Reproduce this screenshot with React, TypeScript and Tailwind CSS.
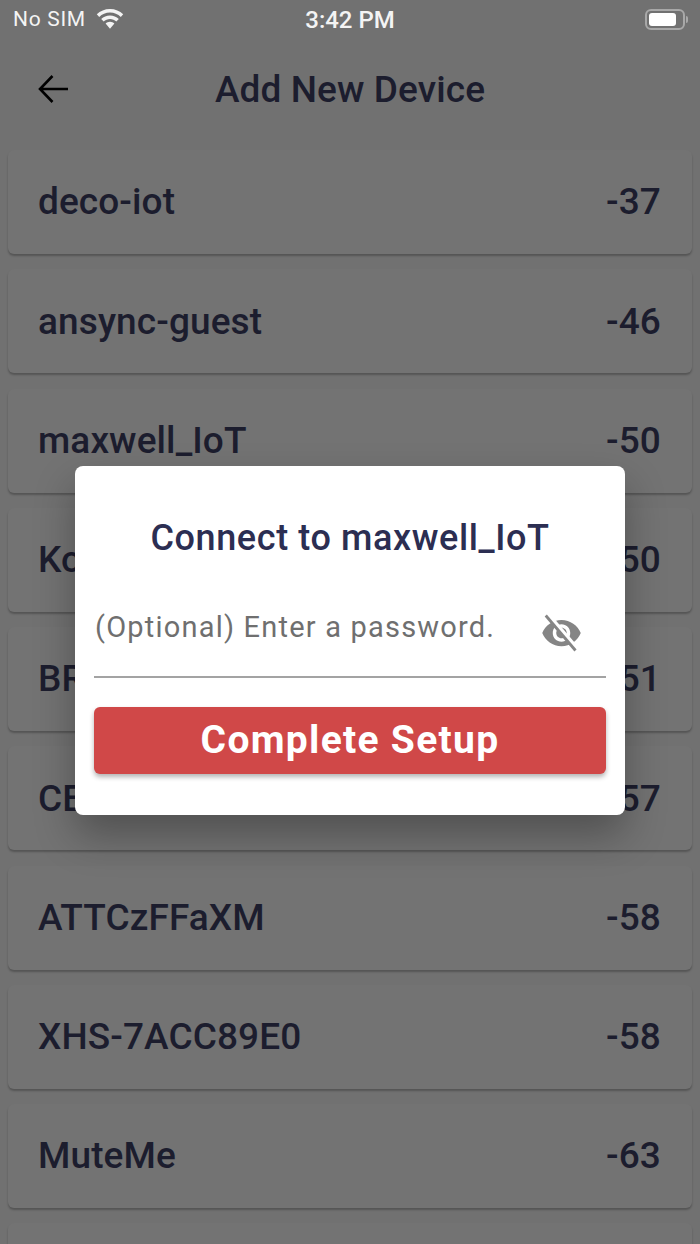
import React, { FC } from 'react';

type TNetwork = {
    name: string;
    rssi: number;
};

const networks: TNetwork[] = [
    { name: 'deco-iot', rssi: -37 },
    { name: 'ansync-guest', rssi: -46 },
    { name: 'maxwell_IoT', rssi: -50 },
    { name: 'Kona', rssi: -50 },
    { name: 'BRW', rssi: -51 },
    { name: 'CE', rssi: -57 },
    { name: 'ATTCzFFaXM', rssi: -58 },
    { name: 'XHS-7ACC89E0', rssi: -58 },
    { name: 'MuteMe', rssi: -63 },
    { name: '', rssi: 0 },
];

const StatusBar: FC = () => (
    <div className="relative flex h-[38px] shrink-0 items-center px-[13px] text-[21px] text-[#f4f4f4]">
        <span className="pt-[2px] tracking-[0.7px]">No SIM</span>
        <svg className="ml-[10px]" width="28" height="20" viewBox="0 0 28 20" fill="currentColor">
            <path d="M14 0C8.8 0 4.2 2 .8 5.3l2.4 2.6C6 5.2 9.8 3.6 14 3.6s8 1.6 10.8 4.3l2.4-2.6C23.8 2 19.2 0 14 0z" />
            <path d="M14 6.4c-3.4 0-6.5 1.3-8.8 3.5l2.5 2.6c1.6-1.5 3.9-2.5 6.3-2.5s4.7 1 6.3 2.5l2.5-2.6C20.5 7.7 17.4 6.4 14 6.4z" />
            <path d="M14 12.8c-1.7 0-3.2.7-4.4 1.7l4.4 5.2 4.4-5.2c-1.2-1-2.7-1.7-4.4-1.7z" />
        </svg>
        <span className="absolute inset-x-0 pt-[2px] text-center text-[24px] font-medium">3:42 PM</span>
        <div className="ml-auto mr-[-1px] flex items-center">
            <div className="h-[21px] w-[40px] rounded-[6px] border-2 border-[#a8a8a8] p-[2px]">
                <div className="h-full w-[27px] rounded-[3px] bg-white" />
            </div>
            <div className="ml-[1px] h-[7px] w-[2px] rounded-r-sm bg-[#a8a8a8]" />
        </div>
    </div>
);

const Header: FC = () => (
    <div className="relative mt-[10px] flex h-[82px] shrink-0 items-center justify-center">
        <svg className="absolute left-[37px]" width="31" height="30" viewBox="0 0 31 30" fill="none" stroke="#000" strokeWidth="2.6">
            <path d="M31 15H3M15.5 2 3 15l12.5 13" />
        </svg>
        <h1 className="pt-[1px] text-[37px] font-medium tracking-[0.1px] text-[#1c1d2e]">Add New Device</h1>
    </div>
);

const ListItem: FC<{ network: TNetwork }> = ({ network }) => (
    <div className="flex h-[104px] shrink-0 items-center justify-between rounded-[6px] bg-[#737373] pl-[30px] pr-[31px] text-[37px] font-medium tracking-[0.1px] text-[#1c1d2e] shadow-[0_2px_2px_rgba(0,0,0,0.25)]">
        <span>{network.name}</span>
        {network.name && <span>{network.rssi}</span>}
    </div>
);

const PasswordDialog: FC = () => (
    <div className="absolute inset-0 flex items-center justify-center pt-[37px]">
        <div className="flex h-[349px] w-[550px] flex-col rounded-[8px] bg-white px-[19px] shadow-[0_20px_40px_rgba(0,0,0,0.3)]">
            <h2 className="mt-[51px] text-center text-[36px] leading-[42px] font-medium tracking-[0.6px] text-[#2c2e52]">
                Connect to maxwell_IoT
            </h2>
            <div className="flex h-[119px] items-start border-b-2 border-[#a3a3a3] pt-[46px]">
                <span className="ml-[1px] text-[29px] leading-[44px] tracking-[1.2px] text-[#6f6f6f]">
                    (Optional) Enter a password.
                </span>
                <svg className="ml-auto mr-[22px] mt-[7px]" width="45" height="42" viewBox="0 0 24 24" fill="#858585">
                    <path d="M12 4.5C7 4.5 2.73 7.61 1 12c1.73 4.39 6 7.5 11 7.5s9.27-3.11 11-7.5c-1.73-4.39-6-7.5-11-7.5zM12 17c-2.76 0-5-2.24-5-5s2.24-5 5-5 5 2.24 5 5-2.24 5-5 5zm0-8c-1.66 0-3 1.34-3 3s1.34 3 3 3 3-1.34 3-3-1.34-3-3-3z" />
                    <path d="M4 1.5 21 21.5" stroke="#fff" strokeWidth="3" />
                    <path d="M3 2 20 22" stroke="#858585" strokeWidth="1.6" />
                </svg>
            </div>
            <button className="mt-[29px] h-[67px] rounded-[6px] bg-[#d04848] text-[39px] font-bold tracking-[1.3px] text-white shadow-[0_3px_5px_rgba(0,0,0,0.3)]">
                Complete Setup
            </button>
        </div>
    </div>
);

export default function App() {
    return (
        <div className="relative flex h-[1244px] w-[700px] flex-col overflow-hidden bg-[#717171] font-['Roboto',sans-serif]">
            <StatusBar />
            <Header />
            <div className="mt-[20px] flex flex-col gap-[15.25px] px-[8px]">
                {networks.map((network, index) => (
                    <ListItem key={index} network={network} />
                ))}
            </div>
            <PasswordDialog />
        </div>
    );
}
